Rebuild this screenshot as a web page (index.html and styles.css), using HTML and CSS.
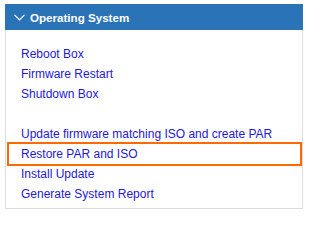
FILE: index.html
```html
<!DOCTYPE html>
<html>
<head>
<meta charset="utf-8">
<link rel="stylesheet" href="styles.css">
</head>
<body>
<div class="panel">
  <div class="panel-header">
    <svg class="chevron" width="11" height="7" viewBox="0 0 11 7"><path d="M0.5 0.8 L5.5 5.8 L10.5 0.8" fill="none" stroke="#fff" stroke-width="1.2"/></svg>
    <span class="title">Operating System</span>
  </div>
  <div class="panel-body">
    <ul class="group">
      <li><a href="#">Reboot Box</a></li>
      <li><a href="#">Firmware Restart</a></li>
      <li><a href="#">Shutdown Box</a></li>
    </ul>
    <ul class="group">
      <li><a href="#">Update firmware matching ISO and create PAR</a></li>
      <li class="selected"><a href="#">Restore PAR and ISO</a></li>
      <li><a href="#">Install Update</a></li>
      <li><a href="#">Generate System Report</a></li>
    </ul>
  </div>
</div>
</body>
</html>
```
FILE: styles.css
```css
html, body { margin: 0; background: #fff; }
body { padding: 4px 0 0 5px; font-family: "Liberation Sans", Arial, sans-serif; }
.panel { width: 298px; }
.panel-header {
  height: 26px;
  background: #2b73b7;
  display: flex;
  align-items: center;
  padding-left: 9px;
  gap: 5px;
  color: #fff;
}
.chevron { display: block; margin-top: 1px; }
.title { font-weight: bold; font-size: 11.6px; }
.panel-body {
  border: 1px solid #dcdcdc;
  border-top: none;
  padding: 14px 0 4px;
}
.group { list-style: none; margin: 0 1px 0 1px; padding: 0; }
.group + .group { margin-top: 20px; }
.group li { height: 20px; line-height: 20px; padding-left: 14px; font-size: 12px; }
.group li.selected { margin: 0 1px 0 2px; padding-left: 12px; }
.group a { color: #2418d6; text-decoration: none; }
.group li.selected { outline: 2px solid #ff6a00; }
```
